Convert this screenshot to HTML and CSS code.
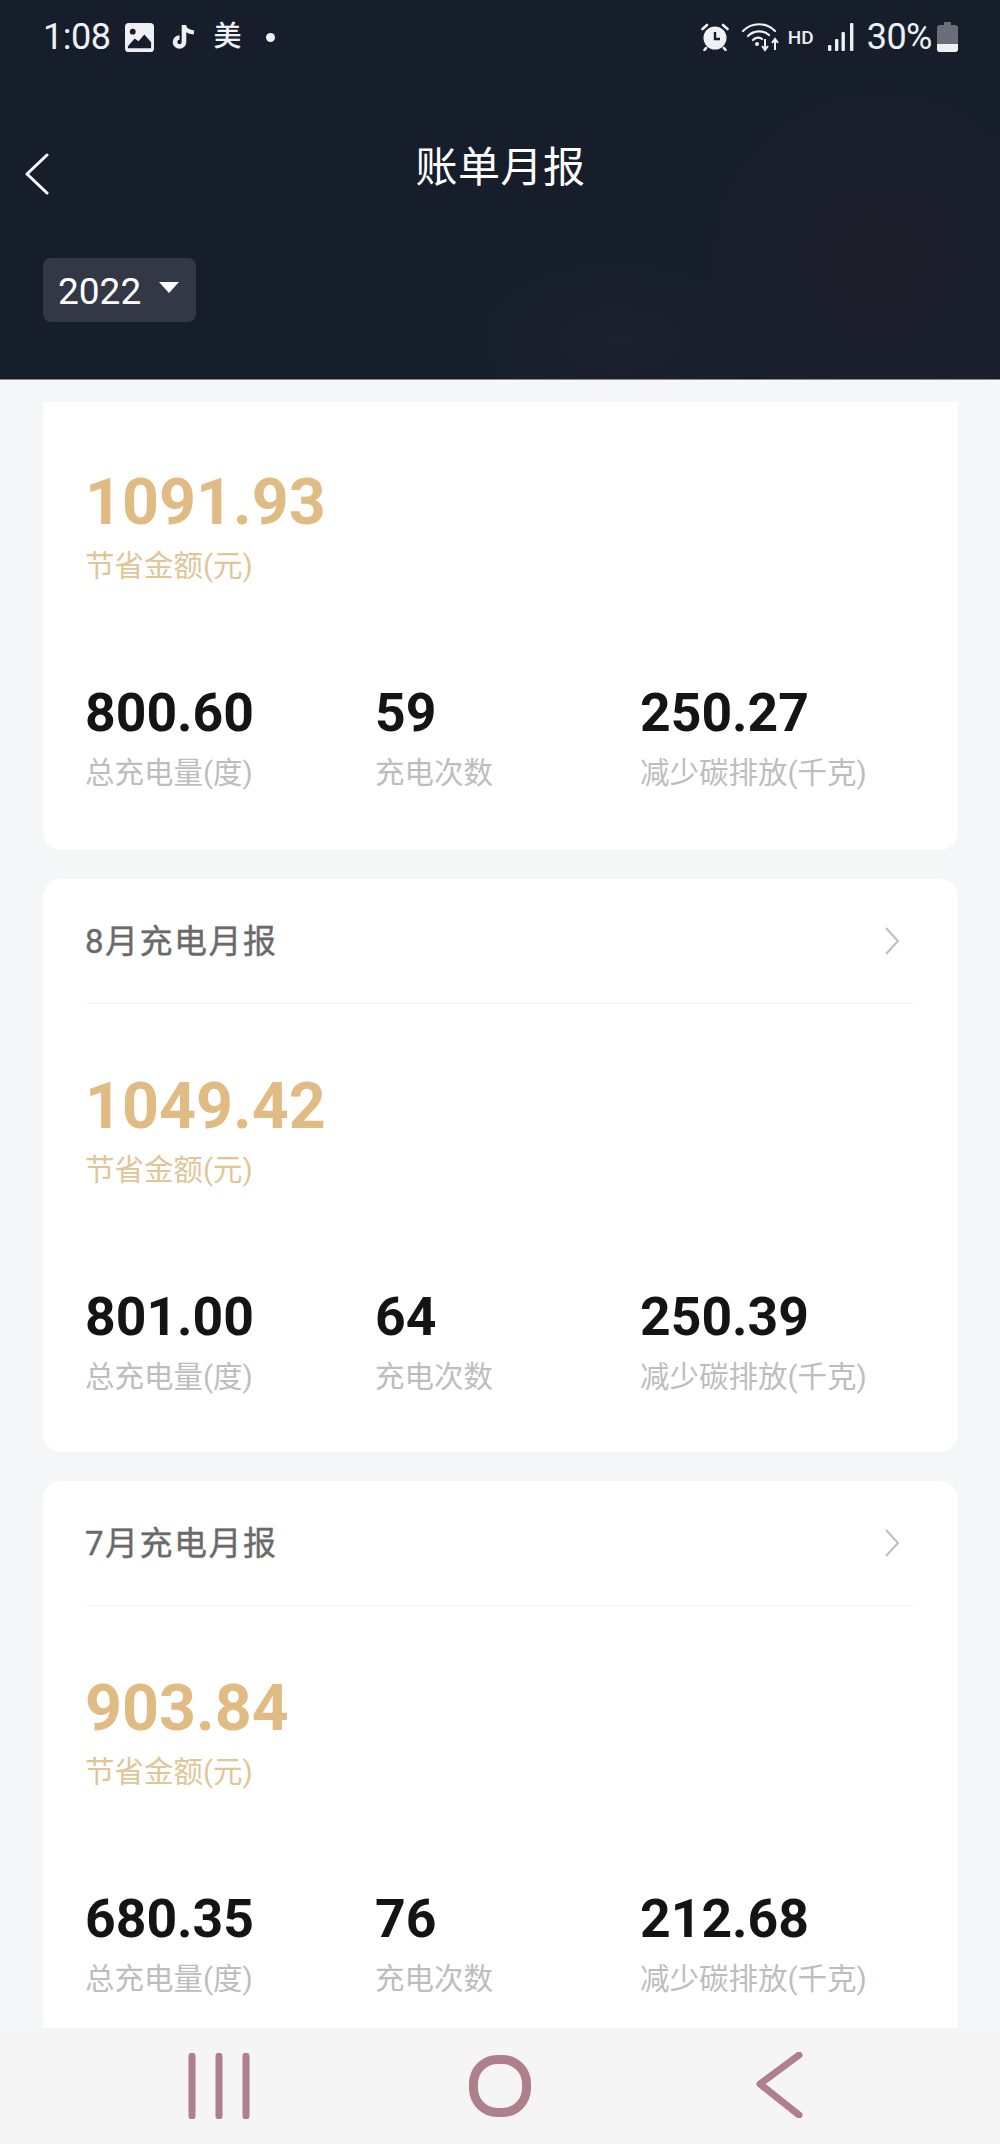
FILE: index.html
```html
<!DOCTYPE html>
<html lang="zh-CN">
<head>
  <meta charset="UTF-8" />
  <title>账单月报</title>
  <link rel="stylesheet" href="styles.css">
</head>
<body>
  <!-- Header -->
  <header class="header">
    <div class="status-bar">
      <div class="status-left">
        <span class="status-time">1:08</span>
        <svg class="ic-gallery" viewBox="0 0 30 30"><rect width="30" height="30" rx="4" fill="#eef0f4"/><circle cx="8" cy="9" r="3" fill="#171e2b"/><path d="M3 24 L10 16 L14 19 L20 12 L27 20 L27 26 L3 26 Z" fill="#171e2b"/></svg>
        <svg class="ic-note" viewBox="0 0 24 28"><path d="M12 2 L12 19 A4.5 4.5 0 1 1 7.5 14.5" fill="none" stroke="#eef0f4" stroke-width="4.6"/><path d="M12 3 C13 7 17 9 22 9.5" fill="none" stroke="#eef0f4" stroke-width="4.2"/></svg>
        <span class="status-mei">美</span>
        <span class="status-dot"></span>
      </div>
      <div class="status-right">
        <svg class="ic-alarm" viewBox="0 0 28 28"><circle cx="14" cy="15" r="11.5" fill="#eef0f4"/><path d="M14 9 V16 H19" fill="none" stroke="#171e2b" stroke-width="2.4"/><path d="M1.5 6 L6 2 M26.5 6 L22 2 M5 25 L3.5 27 M23 25 L24.5 27" stroke="#eef0f4" stroke-width="2.6" stroke-linecap="round"/></svg>
        <svg class="ic-wifi" viewBox="0 0 38 30"><g fill="none" stroke="#eef0f4" stroke-width="2.2" stroke-linecap="round"><path d="M2 9 C11 0 25 0 34 9"/><path d="M7 14 C13 8 23 8 28 13"/><path d="M12 18 C15 15 19 15 21 17"/></g><circle cx="16" cy="22" r="2" fill="#eef0f4"/><path d="M24 17 V27 M21 24 L24 28 L27 24 M34 28 V18 M31 21 L34 17 L37 21" fill="none" stroke="#eef0f4" stroke-width="2"/></svg>
        <span class="status-hd">HD</span>
        <svg class="ic-signal" viewBox="0 0 26 28"><g fill="#eef0f4"><rect x="0" y="22" width="3.4" height="6" rx="1"/><rect x="7" y="16" width="3.4" height="12" rx="1"/><rect x="13.5" y="9" width="3.4" height="19" rx="1"/><rect x="22" y="0" width="3.4" height="28" rx="1"/></g></svg>
        <span class="status-pct">30%</span>
        <svg class="ic-battery" viewBox="0 0 21 30"><path d="M7 0 H14 V3 H18 Q21 3 21 6 V27 Q21 30 18 30 H3 Q0 30 0 27 V6 Q0 3 3 3 H7 Z" fill="#6b6e78"/><path d="M0 22 H21 V27 Q21 30 18 30 H3 Q0 30 0 27 Z" fill="#eef0f4"/></svg>
      </div>
    </div>
    <div class="nav-bar">
      <svg class="ic-back" viewBox="0 0 26 42"><path d="M23 2 L3 21 L23 40" fill="none" stroke="#fff" stroke-width="3" stroke-linecap="round" stroke-linejoin="round"/></svg>
      <h1 class="title">账单月报</h1>
    </div>
    <div class="year-select">
      <span>2022</span>
      <span class="caret"></span>
    </div>
  </header>

  <!-- Monthly reports -->
  <main class="content">
    <div class="list">
      <section class="card first">
        <div class="saved">
          <div class="saved-num">1091.93</div>
          <div class="saved-label">节省金额(元)</div>
        </div>
        <div class="stats">
          <div><div class="stat-num">800.60</div><div class="stat-label">总充电量(度)</div></div>
          <div><div class="stat-num">59</div><div class="stat-label">充电次数</div></div>
          <div><div class="stat-num">250.27</div><div class="stat-label">减少碳排放(千克)</div></div>
        </div>
      </section>

      <section class="card">
        <div class="card-head">
          <span class="card-title">8月充电月报</span>
          <svg class="ic-more" viewBox="0 0 16 30"><path d="M2 2 L14 15 L2 28" fill="none" stroke="#bdbdbd" stroke-width="2"/></svg>
        </div>
        <div class="saved">
          <div class="saved-num">1049.42</div>
          <div class="saved-label">节省金额(元)</div>
        </div>
        <div class="stats">
          <div><div class="stat-num">801.00</div><div class="stat-label">总充电量(度)</div></div>
          <div><div class="stat-num">64</div><div class="stat-label">充电次数</div></div>
          <div><div class="stat-num">250.39</div><div class="stat-label">减少碳排放(千克)</div></div>
        </div>
      </section>

      <section class="card">
        <div class="card-head">
          <span class="card-title">7月充电月报</span>
          <svg class="ic-more" viewBox="0 0 16 30"><path d="M2 2 L14 15 L2 28" fill="none" stroke="#bdbdbd" stroke-width="2"/></svg>
        </div>
        <div class="saved">
          <div class="saved-num">903.84</div>
          <div class="saved-label">节省金额(元)</div>
        </div>
        <div class="stats">
          <div><div class="stat-num">680.35</div><div class="stat-label">总充电量(度)</div></div>
          <div><div class="stat-num">76</div><div class="stat-label">充电次数</div></div>
          <div><div class="stat-num">212.68</div><div class="stat-label">减少碳排放(千克)</div></div>
        </div>
      </section>
    </div>
  </main>

  <!-- Android nav -->
  <footer class="sys-nav">
    <svg class="ic-recents" viewBox="0 0 62 66"><path d="M4 3 V63 M31 3 V63 M58 3 V63" stroke="#b07f8c" stroke-width="7" stroke-linecap="round"/></svg>
    <svg class="ic-home" viewBox="0 0 62 62"><rect x="4.500" y="4.500" width="53" height="53" rx="24" fill="none" stroke="#b07f8c" stroke-width="9"/></svg>
    <svg class="ic-sysback" viewBox="0 0 48 66"><path d="M44 3 L5 32 L44 63" fill="none" stroke="#b07f8c" stroke-width="7" stroke-linecap="round" stroke-linejoin="round"/></svg>
  </footer>
</body>
</html>
```

FILE: styles.css
```css
* {
  box-sizing: border-box;
  margin: 0;
}

html, body {
  height: 100%;
}

body {
  width: 1000px;
  height: 2144px;
  display: flex;
  flex-direction: column;
  overflow: hidden;
  background: #f4f6f8;
  font-family: Roboto, "Noto Sans CJK SC", sans-serif;
}

.header {
  height: 380px;
  flex: none;
  padding: 0 42px 0 43px;
  border-bottom: 1px solid #8a8d94;
  background:
    radial-gradient(circle at 880px 260px, rgba(60, 25, 30, 0.15), transparent 180px),
    radial-gradient(ellipse at 620px 340px, rgba(60, 60, 70, 0.12), transparent 150px),
    #171e2b;
  color: #fff;
}

.status-bar {
  height: 74px;
  display: flex;
  justify-content: space-between;
  align-items: center;
  color: #eef0f4;
}

.status-left, .status-right {
  display: flex;
  align-items: center;
}

.status-time {
  font-size: 36px;
  line-height: 1;
  letter-spacing: -0.5px;
}

.ic-gallery {
  width: 29px;
  height: 29px;
  margin-left: 15px;
}

.ic-note {
  width: 24px;
  height: 28px;
  margin-left: 18px;
}

.status-mei {
  font-size: 28px;
  font-weight: 500;
  margin-left: 17px;
  line-height: 1;
}

.status-dot {
  width: 9px;
  height: 9px;
  border-radius: 50%;
  background: #eef0f4;
  margin-left: 25px;
}

.ic-alarm {
  width: 28px;
  height: 28px;
}

.ic-wifi {
  width: 38px;
  height: 30px;
  margin-left: 12px;
}

.status-hd {
  font-size: 19px;
  font-weight: 500;
  margin-left: 9px;
}

.ic-signal {
  width: 26px;
  height: 28px;
  margin-left: 14px;
}

.status-pct {
  font-size: 36px;
  line-height: 1;
  letter-spacing: -0.5px;
  margin-left: 13px;
}

.ic-battery {
  width: 21px;
  height: 30px;
  margin-left: 5px;
}

.nav-bar {
  position: relative;
  height: 104px;
  margin-top: 42px;
  display: flex;
  justify-content: center;
  align-items: center;
}

.ic-back {
  position: absolute;
  left: -19px;
  top: 37px;
  width: 26px;
  height: 42px;
}

.title {
  font-size: 42px;
  font-weight: 400;
  line-height: 1;
  letter-spacing: 0.5px;
}

.year-select {
  width: 153px;
  height: 64px;
  margin-top: 38px;
  padding: 3px 0 0 15px;
  display: flex;
  align-items: center;
  gap: 18px;
  border-radius: 8px;
  background: #333846;
  font-size: 37px;
}

.caret {
  width: 0;
  height: 0;
  margin-top: -9px;
  border-left: 10px solid transparent;
  border-right: 10px solid transparent;
  border-top: 11px solid #fff;
}

.content {
  flex: 1;
  min-height: 0;
  padding: 22px 42px 0 43px;
}

.list {
  height: 100%;
  overflow: hidden;
  display: flex;
  flex-direction: column;
  gap: 29px;
}

.card {
  flex: none;
  height: 573px;
  padding: 0 43px 0 42px;
  border-radius: 18px;
  background: #fff;
}

/* scrolled partly out of view, head is hidden */
.card.first {
  height: 448px;
  border-radius: 0 0 18px 18px;
}

.card-head {
  height: 125px;
  display: flex;
  justify-content: space-between;
  align-items: center;
  border-bottom: 1px solid #f3f4f5;
}

.card-title {
  margin-top: -5px;
  font-size: 33px;
  font-weight: 400;
  color: #6a6a6a;
  letter-spacing: 1.5px;
  -webkit-text-stroke: 0.4px #6a6a6a;
}

.ic-more {
  width: 16px;
  height: 30px;
  margin-right: 15px;
}

.saved {
  padding-top: 65px;
}

.first .saved {
  padding-top: 63px;
}

.saved-num {
  font-size: 64.5px;
  font-weight: 700;
  line-height: 75px;
  color: #e0bb84;
}

.saved-label {
  margin-top: 6px;
  font-size: 29.5px;
  line-height: 40px;
  color: #e0c697;
}

.stats {
  display: grid;
  grid-template-columns: 290px 265px 1fr;
  margin-top: 96px;
}

.stat-num {
  font-size: 53.5px;
  font-weight: 700;
  line-height: 62px;
  color: #141414;
}

.stat-label {
  margin-top: 8px;
  font-size: 29.5px;
  line-height: 42px;
  color: #bdbdbd;
}

.sys-nav {
  height: 116px;
  flex: none;
  display: flex;
  background: #f5f5f5;
}

.ic-recents {
  width: 62px;
  height: 66px;
  margin: 25px 0 0 188px;
}

.ic-home {
  width: 62px;
  height: 62px;
  margin: 27px 0 0 219px;
}

.ic-sysback {
  width: 48px;
  height: 66px;
  margin: 24px 0 0 224px;
}
```
